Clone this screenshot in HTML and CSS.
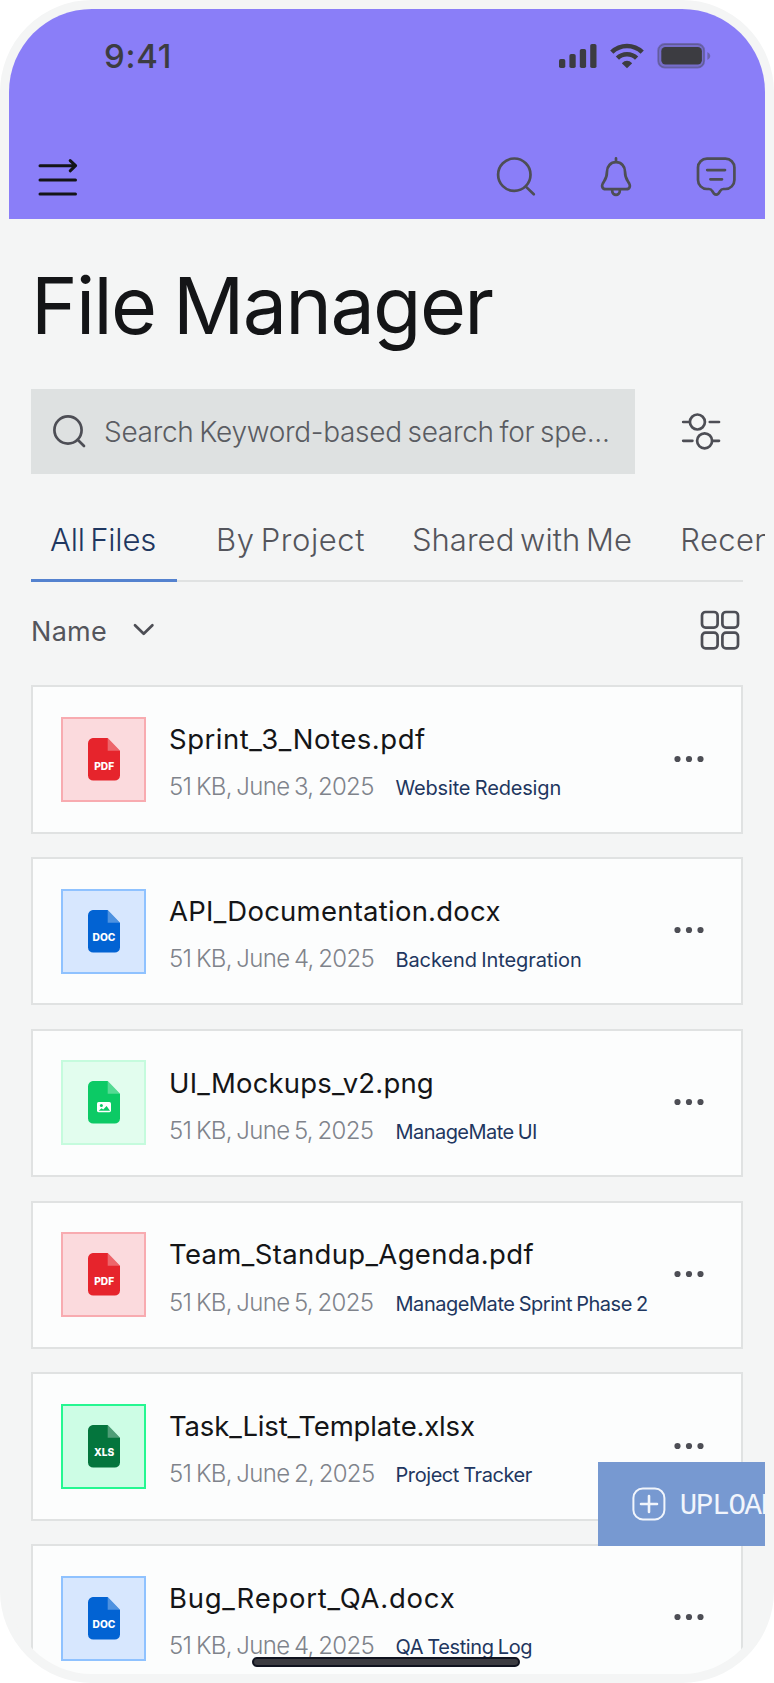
FILE: index.html
```html
<!DOCTYPE html>
<html lang="en">
<head>
<meta charset="utf-8">
<title>File Manager</title>
<link rel="stylesheet" href="styles.css">
</head>
<body>
<svg class="defs" width="0" height="0">
  <symbol id="sheet" viewBox="0 0 32 43">
    <path d="M5.5 0H19.7L32 12.7V37.5A5.2 5.2 0 0 1 26.5 42.6H5.5A5.2 5.2 0 0 1 0 37.5V5.2A5.2 5.2 0 0 1 5.5 0Z" fill="currentColor"/>
    <path d="M19.7 0L32 12.7H19.7Z" fill="#fff" fill-opacity=".3"/>
  </symbol>
  <symbol id="dots" viewBox="0 0 30 8">
    <circle cx="3.5" cy="4" r="3.1"/><circle cx="15" cy="4" r="3.1"/><circle cx="26.5" cy="4" r="3.1"/>
  </symbol>
</svg>
<div class="screen">
  <header class="header">
    <div class="status">
      <span class="time">9:41</span>
      <svg class="signal" width="38" height="26" viewBox="0 0 38 26" fill="#3c3c41">
        <rect x="0" y="16" width="6.3" height="9" rx="1.8"/><rect x="10.4" y="11" width="6.3" height="14" rx="1.8"/><rect x="20.8" y="6" width="6.3" height="19" rx="1.8"/><rect x="31.2" y="1" width="6.3" height="24" rx="1.8"/>
      </svg>
      <svg class="wifi" width="34" height="26" viewBox="0 0 34 26" fill="none" stroke="#3c3c41">
        <path d="M1.8 9.2A21.7 21.7 0 0 1 32.2 9.2" stroke-width="4.6"/>
        <path d="M7.4 15.2A13.6 13.6 0 0 1 26.6 15.2" stroke-width="4.6"/>
        <path d="M17 25.2L11.8 20.2Q17 15.4 22.2 20.2Z" fill="#3c3c41" stroke="none"/>
      </svg>
      <svg class="battery" width="54" height="26" viewBox="0 0 54 26" fill="#3c3c41">
        <rect x="1.2" y="1" width="46" height="23.6" rx="6.6" fill-opacity=".25" stroke="#3c3c41" stroke-opacity=".38" stroke-width="1.8"/>
        <rect x="4.3" y="4" width="40.6" height="17.4" rx="4.2"/>
        <path d="M50.4 9Q53.3 10.3 53.3 13Q53.3 15.7 50.4 17Z" fill-opacity=".4"/>
      </svg>
    </div>
    <nav class="nav">
      <svg class="menu" width="46" height="46" viewBox="0 0 46 46">
        <path d="M5 11.7H40.5M5 26H40.5M5 40H40.5M35.2 6.6L40.6 11.7L35.2 16.8"/>
      </svg>
      <svg width="46" height="46" viewBox="0 0 46 46"><circle cx="21.3" cy="20.7" r="16.2"/><path d="M32.8 32.6L40.8 40.3"/></svg>
      <svg width="46" height="46" viewBox="0 0 46 46">
        <path d="M23 8.2C17.5 8.2 14 12.5 14 17.5C14 22 13.3 24.3 11 27.5C9.3 30 8.8 31 9.2 32.6C9.6 34.5 11 35.2 13 35.2H33C35 35.2 36.4 34.5 36.8 32.6C37.2 31 36.7 30 35 27.5C32.7 24.3 32 22 32 17.5C32 12.5 28.5 8.2 23 8.2ZM23 4.4V8M19.2 35.6V37A3.8 3.8 0 0 0 26.8 37V35.6"/>
      </svg>
      <svg width="46" height="46" viewBox="0 0 46 46">
        <path d="M14 4.6H32.4A9 9 0 0 1 41.4 13.6V26A9 9 0 0 1 32.4 35H30.5Q28.2 35 27.2 37L25.5 39.5Q23.2 41.7 20.9 39.5L19.2 37Q18.2 35 15.9 35H14A9 9 0 0 1 5 26V13.6A9 9 0 0 1 14 4.6ZM14.2 16.1H32M17.4 25.3H29"/>
      </svg>
    </nav>
  </header>

  <main class="main">
    <h1 class="title">File Manager</h1>
    <div class="tools">
      <div class="search">
        <svg width="36" height="36" viewBox="0 0 36 36"><circle cx="17" cy="17" r="13.6"/><path d="M26.7 26.7L33 33"/></svg>
        <span class="placeholder">Search Keyword-based search for spe...</span>
      </div>
      <svg class="filter" width="40" height="40" viewBox="0 0 40 40">
        <circle cx="16.4" cy="11" r="7.5"/><circle cx="23.6" cy="29.8" r="7.5"/>
        <path d="M2.2 11H8.8M28.8 11H38M2.2 29.8H11.4M31.2 29.8H38"/>
      </svg>
    </div>
    <div class="tabs">
      <span class="tab active">All Files</span><span class="tab">By Project</span><span class="tab">Shared with Me</span><span class="tab">Recent</span>
    </div>
    <div class="sort">
      <span class="sort-label">Name</span>
      <svg class="chevron" width="22" height="14" viewBox="0 0 22 14"><path d="M2 2.3L10.7 10.8L19.4 2.3"/></svg>
      <svg class="grid" width="40" height="40" viewBox="0 0 40 40">
        <rect x="2" y="2" width="15.6" height="15.6" rx="3.6"/><rect x="22.4" y="2" width="15.6" height="15.6" rx="3.6"/><rect x="2" y="22.7" width="15.6" height="15.6" rx="3.6"/><rect x="22.4" y="22.7" width="15.6" height="15.6" rx="3.6"/>
      </svg>
    </div>

    <div class="list">
      <article class="card">
        <div class="thumb pdf"><svg width="32" height="43" viewBox="0 0 32 43"><use href="#sheet"/><text x="16.2" y="31.8">PDF</text></svg></div>
        <div class="info"><div class="name">Sprint_3_Notes.pdf</div><div class="meta"><span class="date">51 KB, June 3, 2025</span><span class="tag">Website Redesign</span></div></div>
        <svg class="more" width="30" height="8"><use href="#dots"/></svg>
      </article>
      <article class="card">
        <div class="thumb doc"><svg width="32" height="43" viewBox="0 0 32 43"><use href="#sheet"/><text x="16" y="30.5">DOC</text></svg></div>
        <div class="info"><div class="name">API_Documentation.docx</div><div class="meta"><span class="date">51 KB, June 4, 2025</span><span class="tag">Backend Integration</span></div></div>
        <svg class="more" width="30" height="8"><use href="#dots"/></svg>
      </article>
      <article class="card">
        <div class="thumb png"><svg width="32" height="43" viewBox="0 0 32 43"><use href="#sheet"/><rect x="9" y="21" width="14" height="10.2" rx="1.6" fill="#fff"/><circle cx="13.4" cy="24.6" r="1.5" fill="currentColor"/><path d="M10.6 29.7L13.6 27.3L15.2 28.5L18.6 25L22 29.7Z" fill="currentColor"/></svg></div>
        <div class="info"><div class="name">UI_Mockups_v2.png</div><div class="meta"><span class="date">51 KB, June 5, 2025</span><span class="tag">ManageMate UI</span></div></div>
        <svg class="more" width="30" height="8"><use href="#dots"/></svg>
      </article>
      <article class="card">
        <div class="thumb pdf"><svg width="32" height="43" viewBox="0 0 32 43"><use href="#sheet"/><text x="16.2" y="31.8">PDF</text></svg></div>
        <div class="info"><div class="name">Team_Standup_Agenda.pdf</div><div class="meta"><span class="date">51 KB, June 5, 2025</span><span class="tag">ManageMate Sprint Phase 2</span></div></div>
        <svg class="more" width="30" height="8"><use href="#dots"/></svg>
      </article>
      <article class="card">
        <div class="thumb xls"><svg width="32" height="43" viewBox="0 0 32 43"><use href="#sheet"/><text x="16" y="30.8">XLS</text></svg></div>
        <div class="info"><div class="name">Task_List_Template.xlsx</div><div class="meta"><span class="date">51 KB, June 2, 2025</span><span class="tag">Project Tracker</span></div></div>
        <svg class="more" width="30" height="8"><use href="#dots"/></svg>
      </article>
      <article class="card">
        <div class="thumb doc"><svg width="32" height="43" viewBox="0 0 32 43"><use href="#sheet"/><text x="16" y="30.5">DOC</text></svg></div>
        <div class="info"><div class="name">Bug_Report_QA.docx</div><div class="meta"><span class="date">51 KB, June 4, 2025</span><span class="tag">QA Testing Log</span></div></div>
        <svg class="more" width="30" height="8"><use href="#dots"/></svg>
      </article>
    </div>
  </main>

  <div class="upload">
    <svg width="34" height="34" viewBox="0 0 34 34"><rect x="1.4" y="1.4" width="31" height="31" rx="9.5"/><path d="M9 17H25M17 9V25"/></svg>
    <span class="upload-label">UPLOAD</span>
  </div>
  <div class="home-bar"></div>
</div>
</body>
</html>
```
FILE: styles.css
```css
* { box-sizing: border-box; }
body { margin: 0; background: #fff; font-family: Inter, "Open Sans", sans-serif; }
svg { display: block; flex: none; }
.defs { position: absolute; }

.screen {
  position: relative;
  width: 774px;
  height: 1683px;
  border: 9px solid #f4f5f5;
  border-radius: 92px;
  background: #f4f5f5;
  overflow: hidden;
}

/* Header */
.header { height: 209.5px; background: #8a7ef8; }
.status { display: flex; align-items: center; height: 94px; padding: 0 54.3px 0 95px; }
.time { flex: 1; font-size: 33px; font-weight: 550; line-height: 40px; letter-spacing: .7px; color: #3c3c41; }
.wifi { margin: 0 12.5px 0 13.5px; }
.nav { display: flex; align-items: center; gap: 54px; padding: 50.5px 26.3px 0 26px; }
.nav svg { fill: none; stroke: #4d4e55; stroke-width: 2.7; stroke-linecap: round; stroke-linejoin: round; }
.nav .menu { margin-right: auto; stroke: #141517; stroke-width: 3; }

/* Title and search */
.main { padding: 38.5px 22px 0; }
.title { margin: 0; font-size: 79px; font-weight: 400; line-height: 96px; letter-spacing: -1.65px; word-spacing: -3px; color: #141517; }
.tools { display: flex; align-items: center; justify-content: space-between; margin-top: 36px; padding-right: 22px; }
.search { display: flex; align-items: center; width: 604.3px; height: 84.5px; padding-left: 20px; background: #dee1e1; }
.search svg, .filter, .chevron, .grid { fill: none; stroke: #4d4e55; stroke-width: 2.7; stroke-linecap: round; stroke-linejoin: round; }
.placeholder { margin-left: 17px; padding-top: 2px; font-size: 28px; font-weight: 300; line-height: 40px; letter-spacing: -.3px; word-spacing: -1.8px; color: #5a5c62; white-space: nowrap; }

/* Tabs */
.tabs { display: flex; height: 84px; margin-top: 24.5px; line-height: 84px; font-size: 31px; font-weight: 300; color: #54555c; white-space: nowrap; background: linear-gradient(#e0e2e2, #e0e2e2) 0 100% / 100% 2px no-repeat; }
.tab { flex: none; text-align: center; word-spacing: -3px; }
.tab:nth-child(1) { width: 146px; padding-right: 2px; letter-spacing: -.2px; }
.tab:nth-child(2) { width: 200px; margin-left: 13.5px; letter-spacing: .55px; }
.tab:nth-child(3) { width: 263px; letter-spacing: .05px; }
.tab:nth-child(4) { padding-left: 26.8px; letter-spacing: .37px; }
.tab.active { color: #1f3760; background: linear-gradient(#5482cf, #5482cf) 0 100% / 100% 3px no-repeat; }

/* Sort row */
.sort { display: flex; align-items: center; height: 95px; padding-right: 2.8px; color: #54555c; }
.sort-label { width: 102px; padding-top: 4px; font-size: 27px; font-weight: 400; line-height: 36px; letter-spacing: .3px; }
.grid { margin-left: auto; }

/* File cards */
.list { display: flex; flex-direction: column; gap: 23.35px; margin-top: 8.3px; }
.card { display: flex; flex: none; align-items: center; height: 148.4px; padding: 0 37.5px 0 28px; border: 2px solid #e0e2e2; background: #fcfdfd; }
.thumb { display: flex; flex: none; align-items: center; justify-content: center; width: 85px; height: 85px; border: 2px solid; }
.thumb text { font: 800 10.2px Inter, sans-serif; fill: #fff; text-anchor: middle; }
.pdf { background: #fbdadd; border-color: #f8abb0; }
.pdf svg { color: #e6242c; }
.doc { background: #d7e7fe; border-color: #8fc2ff; }
.doc svg { color: #0263d3; }
.png { background: #e2fdee; border-color: #c5fbdd; }
.png svg { color: #0cca65; }
.xls { background: #cdfde5; border-color: #25f791; }
.xls svg { color: #04753d; }
.info { flex: 1; margin-left: 23px; padding-top: 4.5px; white-space: nowrap; }
.name { font-size: 27.5px; font-weight: 400; line-height: 40px; color: #141517; }
.card:nth-child(1) .name { letter-spacing: .53px; }
.card:nth-child(2) .name { letter-spacing: .24px; }
.card:nth-child(3) .name { letter-spacing: .2px; }
.card:nth-child(4) .name { letter-spacing: .34px; }
.card:nth-child(5) .name { letter-spacing: -.16px; }
.card:nth-child(6) .name { letter-spacing: .75px; }
.meta { display: flex; align-items: baseline; margin-top: 12.2px; line-height: 32px; }
.date { width: 226.5px; font-size: 24px; font-weight: 300; letter-spacing: -.68px; word-spacing: -1.5px; color: #7f838b; }
.tag { font-size: 20px; font-weight: 400; word-spacing: -1px; color: #1f3760; }
.card:nth-child(1) .tag { letter-spacing: -.17px; }
.card:nth-child(2) .tag { letter-spacing: -.1px; }
.card:nth-child(3) .tag { letter-spacing: -.55px; }
.card:nth-child(4) .tag { letter-spacing: -.46px; }
.card:nth-child(5) .tag { letter-spacing: -.42px; }
.card:nth-child(6) .tag { letter-spacing: -.4px; }
.more { margin-bottom: 1.5px; fill: #4d4e55; }

/* Floating overlays */
.upload { position: absolute; top: 1452.5px; left: 589.3px; display: flex; align-items: center; gap: 14px; width: 260px; height: 84.5px; padding-left: 33.5px; background: #7799d1; color: #f1f5fc; font: 29px "Liberation Mono", monospace; letter-spacing: -1.2px; }
.upload-label { padding-top: 5px; }
.upload svg { fill: none; stroke: #f1f5fc; stroke-width: 2; stroke-linecap: round; }
.upload path { stroke-width: 2.6; }
.home-bar { position: absolute; left: 243.3px; bottom: 7px; width: 267.5px; height: 10px; border: 2px solid #10131f; border-radius: 5px; background: #3c3c41; }
```
